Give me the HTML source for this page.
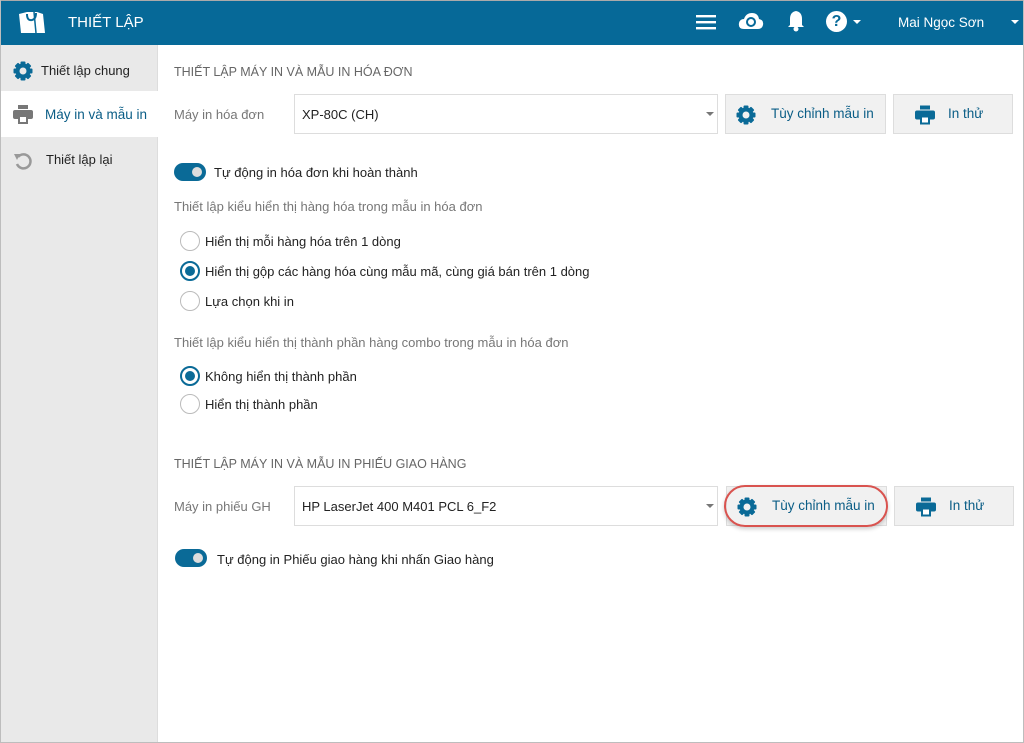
<!DOCTYPE html>
<html><head><meta charset="utf-8"><style>
*{margin:0;padding:0;box-sizing:border-box}
body{width:1024px;height:743px;overflow:hidden;font-family:"Liberation Sans","DejaVu Sans",sans-serif;background:#fff;position:relative;color:#333}
.frame{position:absolute;left:0;top:0;width:1024px;height:743px;border:1px solid #bdbdbd;border-top:none}
.hdr{position:absolute;left:0;top:0;width:1024px;height:45px;background:#066998;border-top:1px solid #aaa}
.a{position:absolute;white-space:nowrap}
.side{position:absolute;left:1px;top:45px;width:157px;height:697px;background:#e9e9e9;border-right:1px solid #ddd}
.sel{position:absolute;left:1px;top:91px;width:157px;height:46px;background:#fff}
.sec{font-size:12.5px;color:#666}
.lbl{font-size:13px;color:#777}
.t{font-size:13px;color:#222}
.box{position:absolute;border:1px solid #ddd;background:#fff}
.btn{position:absolute;border:1px solid #ddd;background:#f1f1f1;height:40px}
.btn span{position:absolute;font-size:13.5px;color:#0a5d86;top:11px}
.tog{position:absolute;width:32px;height:18px;border-radius:9px;background:#0a6a97}
.tog:after{content:"";position:absolute;right:4px;top:4px;width:10px;height:10px;border-radius:50%;background:#ddd}
.r{position:absolute;width:20px;height:20px;border-radius:50%;border:1.5px solid #bbb;background:#fff}
.r.on{border:2px solid #0a6a97}
.r.on:after{content:"";position:absolute;left:3px;top:3px;width:10px;height:10px;border-radius:50%;background:#0a6a97}
.caret{position:absolute;width:0;height:0;border-left:4px solid transparent;border-right:4px solid transparent;border-top:4px solid #777}
</style></head><body>
<svg width="0" height="0" style="position:absolute"><defs><g id="gear"><circle cx="10" cy="10" r="7.5"/><rect x="7.5" y="0.5" width="5" height="19" rx="1"/><rect x="0.5" y="7.5" width="19" height="5" rx="1"/><rect x="7.5" y="0.5" width="5" height="19" rx="1" transform="rotate(45 10 10)"/><rect x="7.5" y="0.5" width="5" height="19" rx="1" transform="rotate(-45 10 10)"/></g></defs></svg>
<div class="hdr"></div>
<svg class="a" style="left:17px;top:9px" width="30" height="26" viewBox="0 0 30 26"><path d="M2 5 L10 3 L20 3 L26 5 L28 24 L4 24 Z" fill="#fff"/><path d="M10 5 Q10 12 15 11 Q19 10 19 4" stroke="#066998" stroke-width="2" fill="none"/><path d="M17 3 L19 24" stroke="#066998" stroke-width="1.5"/></svg>
<div class="a" style="left:68px;top:14px;font-size:15px;color:#fff">THIẾT LẬP</div>
<svg class="a" style="left:696px;top:14px" width="20" height="16"><rect y="1" width="20" height="2.4" fill="#fff"/><rect y="7" width="20" height="2.4" fill="#fff"/><rect y="13" width="20" height="2.4" fill="#fff"/></svg>
<svg class="a" style="left:738px;top:11px" width="26" height="20" viewBox="0 0 26 20"><path d="M6 18 Q0 18 1 12 Q2 8 6 8 Q8 2 14 2 Q20 2 21 8 Q26 9 25 14 Q24 18 20 18 Z" fill="#fff"/><circle cx="13" cy="11" r="4" stroke="#066998" stroke-width="2" fill="none"/></svg>
<svg class="a" style="left:787px;top:10px" width="18" height="22" viewBox="0 0 18 22"><path d="M9 1 Q15 2 15 9 L15 15 L17 17 L1 17 L3 15 L3 9 Q3 2 9 1Z" fill="#fff"/><circle cx="9" cy="19" r="2.5" fill="#fff"/></svg>
<div class="a" style="left:826px;top:11px;width:21px;height:21px;border-radius:50%;background:#fff;color:#066998;font-weight:bold;font-size:16px;text-align:center;line-height:21px">?</div>
<div class="caret" style="left:853px;top:20px;border-top-color:#fff"></div>
<div class="a" style="left:898px;top:15px;font-size:13.5px;color:#fff">Mai Ngọc Sơn</div>
<div class="caret" style="left:1011px;top:20px;border-top-color:#fff"></div>

<div class="side"></div>
<div class="sel"></div>
<svg class="a" style="left:13px;top:61px" width="20" height="20" viewBox="0 0 20 20"><use href="#gear" fill="#0a6a97"/><circle cx="10" cy="10" r="3.5" fill="#e9e9e9"/></svg>
<div class="a t" style="left:41px;top:63px">Thiết lập chung</div>
<svg class="a" style="left:13px;top:105px" width="20" height="19" viewBox="0 0 20 19"><rect x="5" y="0" width="10" height="4" fill="#777"/><rect x="0" y="5" width="20" height="9" rx="2" fill="#777"/><rect x="5" y="10" width="10" height="9" fill="#777"/><rect x="7" y="12" width="6" height="5" fill="#fff"/></svg>
<div class="a" style="left:45px;top:107px;font-size:13.5px;color:#0a5d86">Máy in và mẫu in</div>
<svg class="a" style="left:13px;top:150px" width="20" height="20" viewBox="0 0 20 20"><path d="M5 7 A7 7 0 1 1 4 14" stroke="#999" stroke-width="2.5" fill="none"/><path d="M1 4 L7 4 L4 10 Z" fill="#999"/></svg>
<div class="a t" style="left:46px;top:152px">Thiết lập lại</div>

<div class="a sec" style="left:174px;top:65px">THIẾT LẬP MÁY IN VÀ MẪU IN HÓA ĐƠN</div>
<div class="a lbl" style="left:174px;top:107px">Máy in hóa đơn</div>
<div class="box" style="left:294px;top:94px;width:424px;height:40px"></div>
<div class="a t" style="left:302px;top:107px">XP-80C (CH)</div>
<div class="caret" style="left:706px;top:112px"></div>
<div class="btn" style="left:725px;top:94px;width:161px"><svg class="a" style="left:10px;top:10px" width="20" height="20" viewBox="0 0 20 20"><use href="#gear" fill="#0a6a97"/><circle cx="10" cy="10" r="3.5" fill="#f1f1f1"/></svg><span style="left:45px">Tùy chỉnh mẫu in</span></div>
<div class="btn" style="left:893px;top:94px;width:120px"><svg class="a" style="left:21px;top:10px" width="20" height="20" viewBox="0 0 20 19"><rect x="5" y="0" width="10" height="4" fill="#0a6a97"/><rect x="0" y="5" width="20" height="9" rx="2" fill="#0a6a97"/><rect x="5" y="10" width="10" height="9" fill="#0a6a97"/><rect x="7" y="12" width="6" height="5" fill="#fff"/></svg><span style="left:54px">In thử</span></div>

<div class="tog" style="left:174px;top:163px"></div>
<div class="a t" style="left:214px;top:165px">Tự động in hóa đơn khi hoàn thành</div>
<div class="a lbl" style="left:174px;top:199px">Thiết lập kiểu hiển thị hàng hóa trong mẫu in hóa đơn</div>
<div class="r" style="left:180px;top:231px"></div><div class="a t" style="left:205px;top:234px">Hiển thị mỗi hàng hóa trên 1 dòng</div>
<div class="r on" style="left:180px;top:261px"></div><div class="a t" style="left:205px;top:264px">Hiển thị gộp các hàng hóa cùng mẫu mã, cùng giá bán trên 1 dòng</div>
<div class="r" style="left:180px;top:291px"></div><div class="a t" style="left:205px;top:294px">Lựa chọn khi in</div>
<div class="a lbl" style="left:174px;top:335px">Thiết lập kiểu hiển thị thành phần hàng combo trong mẫu in hóa đơn</div>
<div class="r on" style="left:180px;top:366px"></div><div class="a t" style="left:205px;top:369px">Không hiển thị thành phần</div>
<div class="r" style="left:180px;top:394px"></div><div class="a t" style="left:205px;top:397px">Hiển thị thành phần</div>

<div class="a sec" style="left:174px;top:457px">THIẾT LẬP MÁY IN VÀ MẪU IN PHIẾU GIAO HÀNG</div>
<div class="a lbl" style="left:174px;top:499px">Máy in phiếu GH</div>
<div class="box" style="left:294px;top:486px;width:424px;height:40px"></div>
<div class="a t" style="left:302px;top:499px">HP LaserJet 400 M401 PCL 6_F2</div>
<div class="caret" style="left:706px;top:504px"></div>
<div class="btn" style="left:726px;top:486px;width:161px"><svg class="a" style="left:10px;top:10px" width="20" height="20" viewBox="0 0 20 20"><use href="#gear" fill="#0a6a97"/><circle cx="10" cy="10" r="3.5" fill="#f1f1f1"/></svg><span style="left:45px">Tùy chỉnh mẫu in</span></div>
<div class="a" style="left:724px;top:485px;width:164px;height:42px;border:2px solid #d9534f;border-radius:21px;box-shadow:0 2px 4px rgba(0,0,0,.2)"></div>
<div class="btn" style="left:894px;top:486px;width:120px"><svg class="a" style="left:21px;top:10px" width="20" height="20" viewBox="0 0 20 19"><rect x="5" y="0" width="10" height="4" fill="#0a6a97"/><rect x="0" y="5" width="20" height="9" rx="2" fill="#0a6a97"/><rect x="5" y="10" width="10" height="9" fill="#0a6a97"/><rect x="7" y="12" width="6" height="5" fill="#fff"/></svg><span style="left:54px">In thử</span></div>

<div class="tog" style="left:175px;top:549px"></div>
<div class="a t" style="left:217px;top:552px">Tự động in Phiếu giao hàng khi nhấn Giao hàng</div>
<div class="frame"></div>
</body></html>
